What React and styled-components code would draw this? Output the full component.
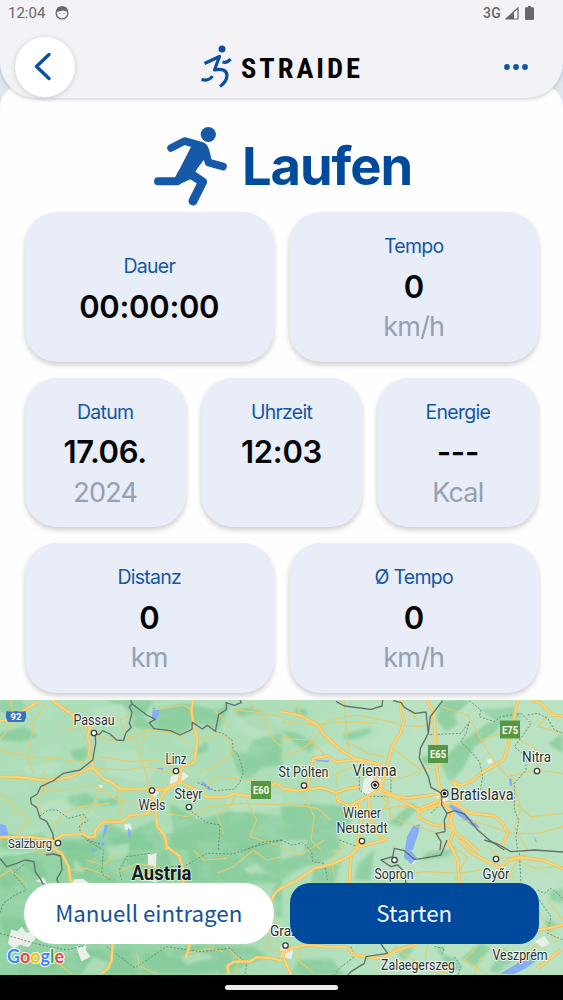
import React from 'react';
import styled, { createGlobalStyle } from 'styled-components';

const GlobalStyle = createGlobalStyle`
    * {
        box-sizing: border-box;
    }

    body {
        margin: 0;
        background: #dce5f0;
        font-family: Inter, "Liberation Sans", sans-serif;
    }
`;

const Screen = styled.div`
    display: flex;
    flex-direction: column;
    width: 563px;
    height: 1000px;
    overflow: hidden;
    background: #dfe6ee;
`;

const Header = styled.header`
    position: relative;
    z-index: 1;
    flex: none;
    height: 98px;
    background: #f3f2f6;
    border-radius: 0 0 36px 36px;
    box-shadow: 0 1px 4px rgba(70, 70, 90, 0.28);
`;

const StatusBar = styled.div`
    display: flex;
    justify-content: space-between;
    align-items: center;
    height: 26px;
    padding: 0 27px 0 8px;
    color: #68686b;
    font-family: Roboto, sans-serif;
    font-size: 15px;
`;

const StatusGroup = styled.div`
    display: flex;
    align-items: center;
    gap: ${({ $gap }) => $gap}px;
`;

const Network = styled.span`
    font-size: 14px;
    font-weight: 500;
    letter-spacing: 0.3px;
`;

const Toolbar = styled.div`
    display: flex;
    justify-content: space-between;
    align-items: center;
    height: 60px;
    margin-top: 11px;
    padding: 0 34px 0 15px;
`;

const BackButton = styled.button`
    display: flex;
    justify-content: center;
    align-items: center;
    width: 60px;
    height: 60px;
    padding: 0 6px 2px 0;
    border: 0;
    border-radius: 50%;
    background: #fff;
    box-shadow: 0 1px 5px rgba(80, 80, 100, 0.24);
`;

const MoreButton = styled.button`
    display: flex;
    padding: 0;
    border: 0;
    background: none;
`;

const Logo = styled.svg`
    width: 162px;
    height: 46px;
    margin-left: -17px;
`;

const Content = styled.main`
    display: flex;
    flex-direction: column;
    flex: none;
    height: 616px;
    margin-top: -14px;
    padding: 38px 24.5px 0;
    background: #fefefe;
    border-radius: 24px 24px 0 0;
`;

const Title = styled.div`
    display: flex;
    flex: none;
    height: 90px;
    padding-left: 125px;
`;

const TitleText = styled.h1`
    margin: 12px 0 0 10.5px;
    color: #004a9c;
    font-size: 52.5px;
    line-height: 65px;
    font-weight: 700;
    letter-spacing: -1.1px;
`;

const Cards = styled.div`
    display: flex;
    flex-direction: column;
    gap: 16px;
`;

const CardRow = styled.div`
    display: flex;
    gap: 15px;
`;

const Card = styled.div`
    display: flex;
    flex: 1;
    flex-direction: column;
    justify-content: center;
    align-items: center;
    height: 149.5px;
    background: #e8edf8;
    border-radius: 32px;
    box-shadow: 0 3px 5px rgba(60, 60, 75, 0.24);
`;

const Label = styled.div`
    height: 40.5px;
    color: #1457a3;
    font-size: 19.5px;
    line-height: 40px;
    letter-spacing: -0.75px;
`;

const Value = styled.div`
    height: 40.5px;
    color: #050608;
    font-size: 31px;
    line-height: 39.6px;
    font-weight: 600;
    letter-spacing: -0.3px;
`;

const Unit = styled.div`
    height: 40.5px;
    color: #93a1b3;
    font-size: 27px;
    line-height: 40.5px;
    letter-spacing: -0.8px;
`;

const MapArea = styled.section`
    position: relative;
    flex: none;
    height: 275px;
`;

const MapCanvas = styled.svg`
    display: block;
    width: 563px;
    height: 275px;
`;

const Actions = styled.div`
    position: absolute;
    top: 183px;
    left: 24px;
    right: 24px;
    display: flex;
    gap: 16px;
`;

const ActionButton = styled.button`
    flex: 1;
    height: 61px;
    padding: 0 0 3px;
    border: 0;
    border-radius: ${({ $primary }) => ($primary ? '20px' : '31px')};
    background: ${({ $primary }) => ($primary ? '#004a9e' : '#fff')};
    color: ${({ $primary }) => ($primary ? '#f3f6fb' : '#14529b')};
    font-family: "Noto Sans CJK SC", "Noto Sans", sans-serif;
    font-size: 22.3px;
    line-height: 34px;
`;

const NavBar = styled.footer`
    display: flex;
    flex: none;
    justify-content: center;
    height: 25px;
    padding-top: 10px;
    background: #000;
`;

const NavHandle = styled.div`
    width: 113px;
    height: 5px;
    border-radius: 3px;
    background: #eee9ed;
`;

const rows = [
    [
        { label: 'Dauer', value: '00:00:00' },
        { label: 'Tempo', value: '0', unit: 'km/h' },
    ],
    [
        { label: 'Datum', value: '17.06.', unit: '2024' },
        { label: 'Uhrzeit', value: '12:03', unit: '' },
        { label: 'Energie', value: '---', unit: 'Kcal' },
    ],
    [
        { label: 'Distanz', value: '0', unit: 'km' },
        { label: 'Ø Tempo', value: '0', unit: 'km/h' },
    ],
];

// The map is drawn in four tiles, three units to a pixel
const tiles = [
    {
        x: 0,
        y: -10,
        forest: [
            'M0 130 70 110 120 140 60 155 0 150Z', 'M210 185 255 170 270 185 250 215 225 210Z',
            'M200 320 260 310 290 330 260 355 215 345Z', 'M315 30 460 30 430 80 470 120 400 110 390 60Z',
            'M465 60 560 40 650 60 690 40 660 120 590 100 540 135 460 110Z', 'M690 180 740 190 760 150 846 130 846 230 790 230 740 270 715 250Z',
            'M700 60 760 50 846 110 830 130 750 110Z', 'M510 340 600 390 700 360 846 380 846 480 500 480 520 420Z',
            'M180 450 290 440 330 400 380 430 460 390 500 480 180 480Z', 'M0 30 60 30 90 55 40 70 0 65Z', 'M290 330 360 320 350 345 300 350Z',
            'M580 180 620 155 625 180 590 195Z', 'M0 420 60 440 130 430 150 480 0 480Z',
        ],
        light: ['M60 230 190 215 160 250 80 255Z', 'M300 190 400 180 470 240 430 280 330 250Z', 'M700 90 760 70 846 80 846 120 770 145 720 120Z', 'M660 310 760 330 846 310 846 350 700 370Z', 'M100 350 180 325 230 370 150 400Z', 'M270 60 370 40 380 100 310 110Z'],
        water: ['M458 52 480 60 474 85 456 88Z', 'M470 234 490 233 490 239 470 240Z', 'M314 404 326 405 318 430 306 452Z', 'M0 402 18 406 25 436 0 438Z', 'M384 412 394 430 390 444 384 438Z', 'M608 272 635 298 628 302 604 282Z'],
        urban: ['M515 260 545 245 565 258 540 275 510 280Z', 'M374 404 390 402 394 417 376 418Z', 'M295 286 306 286 305 294 296 293Z', 'M455 295 475 305 465 320 455 315Z'],
        minor: [
            'M30 30 40 70 30 110 0 150', 'M135 40 100 100 85 210 100 250', 'M0 182 90 200 200 210 270 220', 'M180 110 240 120 265 105',
            'M290 140 350 155 400 145 440 120 520 130 570 160', 'M300 200 390 215 470 210 520 235', 'M280 235 380 240 440 230 520 250',
            'M440 120 415 190 435 240 450 295', 'M120 300 200 300 290 285 350 330 440 340', 'M130 240 140 290 110 330 125 370', 'M0 310 50 360 90 390 40 440',
            'M300 290 280 350 240 390 250 440', 'M150 420 190 370 240 350 330 340', 'M350 300 370 350 350 380', 'M460 60 550 45 580 60', 'M590 150 650 130 700 150 690 200 640 230 600 250',
            'M610 300 650 260 740 270 810 280', 'M710 310 690 350 650 370 670 430', 'M500 370 560 380 630 350 720 340 846 345', 'M700 60 760 65 846 80', 'M740 30 790 80 820 150 846 170',
            'M740 330 770 390 750 440 846 470', 'M400 70 360 90 390 150', 'M640 60 665 80 690 120',
        ],
        major: [
            'M0 93 38 88 70 62 115 35', 'M155 30 185 52 270 110 262 140 272 168 266 190 278 215 278 235 315 270 330 274 362 298 450 295 490 300 540 275',
            'M0 260 60 262 140 272 210 262 245 245 278 232', 'M580 30 574 60 580 100 592 150 583 218 545 230 537 275 600 305 620 322 680 320 700 312 752 318',
            'M0 442 80 440 160 450 190 435 250 432 265 442 285 440 286 420 310 395 365 395 390 376 440 372 465 350 500 300 540 275',
            'M445 298 465 345 472 410 495 438 500 480', 'M810 295 825 278 846 292',
        ],
        border: [
            'M392 30 397 42 388 50 396 67 388 100 394 112 378 128 370 152 350 150 330 132 308 122 298 134 286 130 287 160 278 210 240 240 190 250 160 272 122 290 112 312 92 324 94 342 110 352 120 384 140 394 158 430 161 450',
            'M397 42 440 75 466 88 448 98 462 116 510 122 540 135 576 118 577 97 607 117 622 106 646 124 656 74 680 58 678 38 703 46 724 38 720 30',
        ],
        region: ['M646 124 672 132 696 150 700 180 714 194 723 220 730 250 718 280 700 298 645 302 590 276', 'M120 378 145 360 170 360 206 385 250 373 264 392 239 406 240 434 274 454 310 465', 'M575 365 620 398 660 405 655 480', 'M846 450 790 456 740 480'],
    },
    {
        x: 281,
        y: -10,
        forest: [
            'M190 130 265 115 275 125 235 145 190 150Z', 'M480 30 570 30 520 75 530 105 495 125 465 90Z', 'M500 270 480 220 520 170 620 100 665 90 640 130 580 170 550 230 515 270Z',
            'M0 350 90 340 200 350 210 400 170 430 180 480 0 480Z', 'M40 55 80 60 75 80 45 72Z', 'M0 120 50 130 100 160 90 190 40 160Z', 'M800 160 846 130 846 190Z', 'M320 400 395 340 410 355 360 410Z', 'M420 200 450 195 450 225 425 220Z', 'M600 60 700 50 720 85 640 90Z',
        ],
        light: ['M375 70 420 75 430 160 410 240 370 210 390 130Z', 'M560 370 650 390 700 370 740 420 620 440Z', 'M700 120 750 150 770 220 720 250 680 220Z', 'M100 180 170 150 240 185 210 225 110 215Z', 'M330 100 350 120 330 165 260 175Z'],
        water: ['M398 405 418 403 412 430 395 480 372 480 378 440Z', 'M510 343 540 360 590 405 597 415 570 405 528 372 505 350Z', 'M684 265 692 266 694 290 686 286Z', 'M104 209 145 211 142 217 108 214Z', 'M758 438 770 458 763 454Z', 'M365 320 440 312 445 318 390 326Z'],
        urban: ['M250 268 275 260 300 270 304 300 280 312 245 310Z', 'M618 210 633 206 632 219 622 220Z', 'M460 310 486 300 502 330 480 340Z'],
        minor: [
            'M0 200 50 185 100 150 140 90 230 75 350 100', 'M190 30 195 110 205 190', 'M60 80 45 30', 'M0 95 110 105 200 95 290 100', 'M350 105 420 110 465 90', 'M310 200 260 190 210 160',
            'M330 170 380 210 420 240 380 260 310 270', 'M380 60 410 90', 'M420 230 460 240 490 220', 'M480 50 560 75 600 150 690 120', 'M600 150 640 215 680 260 768 240 846 250', 'M700 140 770 180 768 240', 'M690 250 720 360 700 410 740 480', 'M520 290 570 320 690 330 750 380 846 370',
            'M320 320 330 380 380 400 470 430 490 480', 'M60 300 100 380 90 450 120 480', 'M0 340 110 355 150 390', 'M170 290 165 250 235 225', 'M130 195 90 150 0 145', 'M810 60 770 110 846 130', 'M540 390 600 400 690 430 770 430 846 410', 'M265 370 340 350 410 350', 'M300 310 320 340 280 390',
        ],
        major: [
            'M0 65 60 78 110 105 130 135 180 180 220 205 305 225', 'M80 290 90 240 96 205 140 198 165 216 220 210 305 225', 'M0 295 50 302 120 293 165 308 200 296 235 290',
            'M165 308 170 332 205 348 262 318 300 295 322 210 335 165 358 130 370 90 358 60 362 30', 'M262 318 266 380 290 430 320 452', 'M235 340 240 400 225 480',
            'M270 240 300 295 340 320 410 358 470 335 488 312', 'M300 310 380 325 450 315 490 310', 'M435 30 458 65 462 120 465 220 475 290 490 310', 'M490 340 535 335 525 290 515 275 540 285 570 275 600 250 668 210 682 160 700 80 712 30', 'M410 355 415 385 460 405 508 408 513 370 490 340 430 358 410 370',
            'M508 408 530 435 560 455 590 485', 'M520 340 570 370 640 378 665 400 680 430 660 475', 'M750 30 780 40 815 75 846 78', 'M500 370 520 420 500 470',
        ],
        border: ['M165 34 190 48 270 58 303 48 305 30', 'M336 32 360 38 370 52 402 70 435 66 442 130 418 175 415 205 442 260 450 292 482 310 482 345 498 370 520 362 550 372 590 420 625 450 670 480', 'M485 32 448 80 442 130', 'M498 370 490 390 492 425 465 430 480 455 477 480'],
        region: ['M448 134 540 130 565 95 555 130 540 155 570 185 596 216 605 260 595 320', 'M565 32 600 60 595 80 640 95 660 80 720 70 750 100 730 130 700 170 735 200 735 240 700 280 700 360 713 390 705 440 710 480', 'M740 75 770 70 800 85 820 120 846 130', 'M235 260 235 300 260 318 310 320 330 305 330 260', 'M450 370 470 350 480 320'],
    },
    {
        x: 0,
        y: 140,
        forest: [
            'M0 50 40 45 65 110 30 150 0 140Z', 'M60 50 120 60 145 110 100 110Z', 'M190 0 270 20 330 70 350 130 230 130 195 70Z', 'M360 40 430 50 500 30 520 90 400 90Z', 'M560 30 680 15 846 30 846 130 550 130 570 80Z',
            'M0 230 60 230 80 260 20 300Z', 'M190 350 280 325 390 330 410 400 180 405Z', 'M430 340 600 315 760 320 800 350 680 400 430 405Z', 'M820 140 846 120 846 230 825 230Z', 'M70 330 170 350 180 405 50 405Z',
        ],
        light: ['M320 20 390 10 380 50 330 60Z', 'M225 55 255 95 220 100Z', 'M730 90 770 70 795 98 750 102Z', 'M280 350 330 370 300 405 240 405Z', 'M540 350 600 335 640 350 560 375Z'],
        water: ['M272 25 290 30 282 38Z', 'M300 5 314 8 310 20Z'],
        urban: ['M445 42 455 46 468 40 466 84 456 76 446 78Z', 'M215 130 225 118 250 118 265 130Z', 'M35 270 52 276 65 262 78 280 96 276 105 296 85 320 60 312 42 325 25 310Z', 'M230 320 246 324 260 310 256 330 270 350 245 362Z', 'M110 122 130 115 140 130Z', 'M430 120 450 105 470 125Z'],
        minor: ['M0 110 30 90 80 130', 'M210 90 260 85 330 110', 'M260 60 310 75 350 40', 'M350 100 410 70 520 90', 'M580 30 610 60 680 55', 'M650 100 700 80 760 30', 'M760 30 800 60 846 50', 'M160 30 120 40 90 20', 'M100 350 160 360 220 405', 'M410 340 420 380 470 400', 'M560 340 630 325 670 335', 'M700 405 720 360 680 320', 'M830 230 800 320 846 340'],
        major: ['M145 18 185 40 206 80 212 130', 'M498 0 500 20 538 48 550 90 550 130', 'M808 190 825 160 846 140', 'M338 312 335 360 325 385 303 402', 'M570 312 557 355', 'M686 405 682 378 700 366 750 364 770 352 815 355 846 362'],
        border: ['M0 55 20 80 50 70 75 60 102 65 106 95 122 118 130 134', 'M138 45 160 42 182 48 186 90 170 118 176 130'],
        region: ['M0 218 10 190 45 165 80 150 40 100 75 70', 'M450 40 380 50 358 90 365 120', 'M470 85 560 75 620 40 700 42 760 20 846 0', 'M0 280 110 312 200 330 260 315', 'M320 320 405 384 500 320 600 335 690 325 740 370 735 405', 'M260 0 310 30 305 100 330 120'],
    },
    {
        x: 281,
        y: 140,
        forest: ['M0 20 80 10 170 40 120 70 70 80 0 120Z', 'M100 80 180 70 160 130 90 130Z', 'M230 70 280 30 270 120 220 120Z', 'M440 35 520 28 500 50 420 60Z', 'M540 355 600 310 630 325 580 380Z', 'M800 150 846 145 846 190 810 180Z', 'M790 240 830 250 800 280Z', 'M625 390 670 325 700 360 650 400Z', 'M460 325 485 318 485 345Z', 'M370 360 400 330 380 315 350 345Z', 'M480 340 530 360 540 390 500 390Z', 'M50 360 150 355 190 405 30 405Z'],
        light: ['M310 120 340 80 420 90 490 120Z', 'M550 30 610 70 560 100 510 80Z', 'M690 100 790 100 846 140 780 170Z', 'M400 320 460 350 450 405 380 405Z', 'M0 0 80 0 70 40 0 60Z'],
        water: ['M378 0 398 0 386 28 408 55 390 72 368 52Z', 'M655 402 705 373 755 335 778 340 775 355 735 385 700 402Z'],
        urban: ['M762 305 790 290 804 310 785 320Z', 'M385 45 405 60 396 72 378 62Z', 'M0 320 35 330 30 355 0 350Z'],
        minor: ['M0 20 60 45 130 0', 'M180 0 190 20 150 60 160 110', 'M350 110 430 95 530 100 600 90 700 110', 'M520 120 560 50 500 10', 'M620 20 660 55 740 45', 'M680 110 710 60 760 85 846 80', 'M800 180 846 240', 'M780 270 846 260', 'M770 310 740 340 630 330', 'M340 320 410 370 480 405', 'M440 312 430 380 500 400', 'M600 350 580 405', 'M60 320 50 360 100 400', 'M590 320 550 360 620 402', 'M240 350 310 360 350 320', 'M760 180 785 240 830 310'],
        major: ['M242 0 230 25 205 48 155 72 100 85 50 120 0 145', 'M210 48 205 130', 'M310 0 245 18 225 20', 'M534 0 570 38 620 65 660 82 680 62 720 52 790 62 846 86', 'M500 0 530 60 535 130', 'M0 330 15 370 30 405', 'M0 345 30 325 75 315 140 320 195 320 220 345 300 355 350 330 410 312', 'M846 255 800 265 770 270', 'M770 385 840 330'],
        border: ['M498 0 480 45 425 55 400 58 370 32 340 25 335 50 300 60 330 80 350 75 370 95 375 130', 'M610 0 650 12 690 35 760 30 846 36', 'M300 312 320 340 255 350 250 370 210 395 200 405'],
        region: ['M0 0 35 15 65 8 92 35 95 65 130 70 140 120', 'M715 40 720 130', 'M775 180 810 230 800 280 846 300', 'M770 150 790 160 810 145 846 175', 'M210 320 220 350 175 385 160 405', 'M460 320 490 325 480 348', 'M520 350 540 380 530 405', 'M175 0 230 20'],
    },
];

// Map positions in pixels; width fixes the length of the condensed label
const places = [
    { name: 'Passau', x: 94, y: 725, w: 41, dot: [94, 733] },
    { name: 'Linz', x: 176, y: 763.5, w: 21, dot: [176, 771] },
    { name: 'Wels', x: 152, y: 810, w: 27, dot: [152, 790.5] },
    { name: 'Steyr', x: 188.5, y: 799, w: 28, dot: [189, 807] },
    { name: 'Salzburg', x: 30, y: 848, w: 44, size: 12.5, dot: [58, 843] },
    { name: 'St Pölten', x: 303.5, y: 777, w: 50, dot: [304, 785.5] },
    { name: 'Vienna', x: 374.5, y: 776, w: 44, size: 16, dot: [375, 785], capital: true },
    { name: 'Bratislava', x: 482, y: 799.5, w: 63, size: 16, dot: [444.5, 793.5], capital: true },
    { name: 'Nitra', x: 536.5, y: 762, w: 29, dot: [537, 771] },
    { name: 'Wiener', x: 362, y: 818, w: 38 },
    { name: 'Neustadt', x: 362, y: 833, w: 51, dot: [362, 841] },
    { name: 'Sopron', x: 394, y: 879, w: 39, dot: [394.5, 860] },
    { name: 'Győr', x: 496, y: 879, w: 27, dot: [496, 859] },
    { name: 'Graz', x: 284, y: 936, w: 28, size: 15, dot: [285.5, 945.5] },
    { name: 'Zalaegerszeg', x: 418, y: 969.5, w: 74 },
    { name: 'Veszprém', x: 520, y: 960, w: 55 },
];

const roadSigns = [
    { name: 'E60', x: 251, y: 781 },
    { name: 'E65', x: 428, y: 745 },
    { name: 'E75', x: 500, y: 720.5 },
];

const googleLetters = [
    ['G', '#4285f4'], ['o', '#ea4335'], ['o', '#fbbc05'], ['g', '#4285f4'], ['l', '#34a853'], ['e', '#ea4335'],
];

const MapLand = ({ tile }) => (
    <g transform={`translate(${tile.x} ${tile.y}) scale(.33333)`}>
        <path d={tile.forest.join('')} fill="#83ca98" opacity=".72" filter="url(#soften)" />
        <path d={tile.light.join('')} fill="#bce2c4" opacity=".7" filter="url(#soften)" />
    </g>
);

const MapLines = ({ tile }) => (
    <g transform={`translate(${tile.x} ${tile.y}) scale(.33333)`} strokeLinejoin="round">
        <path d={tile.urban.join('')} fill="#eceeea" stroke="#eceeea" strokeWidth="3" />
        <path d={tile.water.join('')} fill="#86aef3" />
        <g fill="none">
            <path d={tile.minor.join('')} stroke="#e6cb6c" strokeWidth="3.4" />
            <path d={tile.region.join('')} stroke="#68876f" strokeWidth="2.7" strokeDasharray="6 5" />
            <path d={tile.major.join('')} stroke="#e6bd66" strokeWidth="9.5" />
            <path d={tile.major.join('')} stroke="#fdd373" strokeWidth="6" />
            <path d={tile.border.join('')} stroke="#62716a" strokeWidth="4" />
        </g>
    </g>
);

const Place = ({ place }) => (
    <g>
        {place.dot && (
            <circle
                cx={place.dot[0]}
                cy={place.dot[1] - 700}
                r={place.capital ? 3.5 : 2.7}
                fill="#fff"
                stroke="#373d3a"
                strokeWidth="1.3"
            />
        )}
        {place.capital && <circle cx={place.dot[0]} cy={place.dot[1] - 700} r="1.8" fill="#151918" />}
        <text
            x={place.x}
            y={place.y - 700}
            textLength={place.w}
            lengthAdjust="spacingAndGlyphs"
            textAnchor="middle"
            fontSize={place.size || 14}
            fill="#29302d"
            stroke="#f3f8f3"
            strokeWidth="2.2"
            paintOrder="stroke"
            strokeLinejoin="round"
        >
            {place.name}
        </text>
    </g>
);

const RouteMap = () => (
    <MapCanvas viewBox="0 0 563 275" fontFamily="Roboto, sans-serif">
        <defs>
            <filter id="soften"><feGaussianBlur stdDeviation="4" /></filter>
            <filter id="woods" x="0" y="0" width="100%" height="100%">
                <feTurbulence type="fractalNoise" baseFrequency=".035 .05" numOctaves="4" seed="8" />
                <feColorMatrix values="0 0 0 0 .48  0 0 0 0 .78  0 0 0 0 .57  4 0 0 0 -2" />
            </filter>
            <linearGradient id="plain">
                <stop offset=".5" stopColor="#bce3c4" stopOpacity="0" />
                <stop offset=".7" stopColor="#bce3c4" stopOpacity=".75" />
            </linearGradient>
            <linearGradient id="alps" x1="0" y1="0" x2="1" y2="0">
                <stop offset=".35" stopColor="#89ce9c" stopOpacity=".7" />
                <stop offset=".7" stopColor="#89ce9c" stopOpacity="0" />
            </linearGradient>
        </defs>
        <rect width="563" height="275" fill="#addeb8" />
        <rect width="563" height="275" fill="url(#plain)" />
        <path d="M0 158 60 148 130 135 200 132 260 122 330 115 400 140 400 275 0 275Z" fill="url(#alps)" />
        {tiles.map((tile) => <MapLand key={`${tile.x},${tile.y}`} tile={tile} />)}
        <rect width="563" height="275" filter="url(#woods)" opacity=".25" />
        {tiles.map((tile) => <MapLines key={`${tile.x},${tile.y}`} tile={tile} />)}
        <path d="M6.5 11Q11 12 16 11Q21 12 25.5 11 27.5 17 24 22H8Q4.5 17 6.500 11Z" fill="#3973b9" />
        <text x="16" y="20.3" textAnchor="middle" fontSize="9.5" fontWeight="700" fill="#fff">92</text>
        {roadSigns.map((sign) => (
            <g key={sign.name}>
                <rect x={sign.x} y={sign.y - 700} width="20" height="18" fill="#569841" />
                <text x={sign.x + 10} y={sign.y - 687} textAnchor="middle" textLength="16" lengthAdjust="spacingAndGlyphs" fontSize="11" fontWeight="700" fill="#fff">{sign.name}</text>
            </g>
        ))}
        {places.map((place) => <Place key={place.name} place={place} />)}
        <text x="161.5" y="180" textAnchor="middle" textLength="60" lengthAdjust="spacingAndGlyphs" fontSize="19.5" fontWeight="700" fill="#171c1a" stroke="#e0f0e3" strokeWidth="1.5" paintOrder="stroke">Austria</text>
        <text x="7" y="263" textLength="57" lengthAdjust="spacingAndGlyphs" fontFamily="Lato, sans-serif" fontSize="19" fontWeight="700" stroke="#fff" strokeWidth="2" paintOrder="stroke" strokeLinejoin="round">
            {googleLetters.map(([letter, color], index) => <tspan key={index} fill={color}>{letter}</tspan>)}
        </text>
    </MapCanvas>
);

const App = () => (
    <>
        <GlobalStyle />
        <Screen>
            <Header>
                <StatusBar>
                    <StatusGroup $gap={10}>
                        <span>12:04</span>
                        <svg width="14" height="14" viewBox="0 0 14 14">
                            <circle cx="7" cy="7" r="5.9" fill="none" stroke="#68686b" strokeWidth="1.3" />
                            <path d="M1 6 2.5 1.5Q7-1 11.5 1.5L13 6 10 5 8 4.5 6 5Z" fill="#68686b" />
                            <path d="M4.5 7.5h1M8.5 7.5h1" stroke="#68686b" strokeWidth="1" />
                        </svg>
                    </StatusGroup>
                    <StatusGroup $gap={4}>
                        <Network>3G</Network>
                        <svg width="14" height="13" viewBox="0 0 14 13">
                            <path d="M13 1V12H1Z" fill="none" stroke="#68686b" strokeWidth="1.2" />
                            <path d="M1 12 9 4.5V12Z" fill="#68686b" />
                        </svg>
                        <svg width="13" height="14" viewBox="0 0 13 14">
                            <path d="M5 0h3v1.2h2q1 0 1 1V13q0 1-1 1H3q-1 0-1-1V2.2q0-1 1-1h2Z" fill="#68686b" />
                        </svg>
                    </StatusGroup>
                </StatusBar>
                <Toolbar>
                    <BackButton aria-label="Zurück">
                        <svg width="30" height="30" viewBox="0 0 30 30">
                            <path d="M22 3.5 9.5 15.5 22 27.5" fill="none" stroke="#0b50a0" strokeWidth="3.4" strokeLinecap="round" strokeLinejoin="round" />
                        </svg>
                    </BackButton>
                    <Logo viewBox="0 0 162 46">
                        <circle cx="22" cy="5" r="3.5" fill="#0b50a0" />
                        <g fill="none" stroke="#0b50a0" strokeWidth="3.2" strokeLinejoin="round">
                            <path d="M4.5 19.5 19.5 12.5 14.5 26Q26 23.5 27 31Q27 37.5 20 42.5" />
                            <path d="M22.5 18Q27 19.5 30.5 15M1.5 35.5Q9 37.5 12.5 32" />
                        </g>
                        <text x="41" y="33.5" textLength="119" lengthAdjust="spacing" fontFamily="'Roboto Condensed', Roboto, sans-serif" fontStretch="condensed" fontSize="28.5" fontWeight="700" fill="#050506">STRAIDE</text>
                    </Logo>
                    <MoreButton aria-label="Mehr">
                        <svg width="26" height="10" viewBox="0 0 26 10" fill="#0b56a5">
                            <circle cx="4" cy="5" r="2.9" />
                            <circle cx="13" cy="5" r="2.9" />
                            <circle cx="22" cy="5" r="2.9" />
                        </svg>
                    </MoreButton>
                </Toolbar>
            </Header>
            <Content>
                <Title>
                    <svg width="82" height="88" viewBox="0 0 82 88">
                        <circle cx="58.3" cy="12.5" r="7.6" fill="#165aa7" />
                        <path d="M43 21Q52 19 56 25L59 31 47 47 41 57 30 62 24 58Z" fill="#165aa7" />
                        <g fill="none" stroke="#165aa7" strokeLinecap="round" strokeLinejoin="round">
                            <path d="M21 26 34.5 19 52 24Q54.5 25 55.5 29L58.5 40.5 73 44.5" strokeWidth="7.6" />
                            <path d="M32 51 27.5 59.3H8" strokeWidth="8" />
                            <path d="M38.5 50.5 52.5 60 43 79" strokeWidth="9" />
                        </g>
                    </svg>
                    <TitleText>Laufen</TitleText>
                </Title>
                <Cards>
                    {rows.map((row, index) => (
                        <CardRow key={index}>
                            {row.map((card) => (
                                <Card key={card.label}>
                                    <Label>{card.label}</Label>
                                    <Value>{card.value}</Value>
                                    {card.unit !== undefined && <Unit>{card.unit}</Unit>}
                                </Card>
                            ))}
                        </CardRow>
                    ))}
                </Cards>
            </Content>
            <MapArea>
                <RouteMap />
                <Actions>
                    <ActionButton>Manuell eintragen</ActionButton>
                    <ActionButton $primary>Starten</ActionButton>
                </Actions>
            </MapArea>
            <NavBar>
                <NavHandle />
            </NavBar>
        </Screen>
    </>
);

export default App;
